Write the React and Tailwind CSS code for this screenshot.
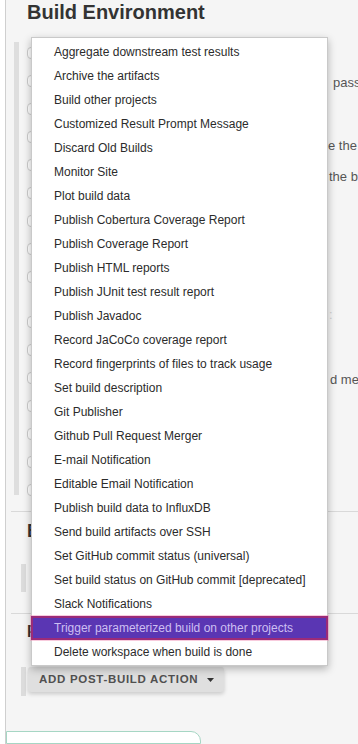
import React from "react";

const items = [
  "Aggregate downstream test results",
  "Archive the artifacts",
  "Build other projects",
  "Customized Result Prompt Message",
  "Discard Old Builds",
  "Monitor Site",
  "Plot build data",
  "Publish Cobertura Coverage Report",
  "Publish Coverage Report",
  "Publish HTML reports",
  "Publish JUnit test result report",
  "Publish Javadoc",
  "Record JaCoCo coverage report",
  "Record fingerprints of files to track usage",
  "Set build description",
  "Git Publisher",
  "Github Pull Request Merger",
  "E-mail Notification",
  "Editable Email Notification",
  "Publish build data to InfluxDB",
  "Send build artifacts over SSH",
  "Set GitHub commit status (universal)",
  "Set build status on GitHub commit [deprecated]",
  "Slack Notifications",
  "Trigger parameterized build on other projects",
  "Delete workspace when build is done",
];

const font = { fontFamily: '"Liberation Sans", Arial, Helvetica, sans-serif' };

function Checkbox({ extra }) {
  return (
    <div
      className={`w-[13px] h-[12px] rounded-[4px] border border-[#cdcdcd] bg-white shrink-0 ${extra}`}
    />
  );
}

function PostBuildMenu() {
  return (
    <div className="absolute left-[31px] top-[37px] w-[297px] bg-white border border-[#c9c9c9] pt-[2px] pb-[1px] shadow-[0_3px_8px_rgba(0,0,0,0.28)]">
      {items.map((label, i) =>
        i === 24 ? (
          <div
            key={label}
            className="-mx-[1px] h-[24px] flex items-center pl-[21px] bg-[#5a36b3] border-2 border-[#9b2b78] text-[12px] text-[#cdbff2] shadow-[0_0_0_1px_rgba(240,140,180,0.45)]"
          >
            {label}
          </div>
        ) : (
          <div
            key={label}
            className="h-[24px] flex items-center pl-[22px] text-[12px] text-[#2b2b2b]"
          >
            {label}
          </div>
        )
      )}
    </div>
  );
}

export default function App() {
  return (
    <div
      className="relative w-[358px] h-[744px] overflow-hidden flex bg-white"
      style={font}
    >
      {/* page gutter */}
      <div className="w-[6px] shrink-0 bg-white border-r border-[#cfcfcf]" />

      <div className="flex-1 bg-[#f5f5f5] flex flex-col">
        <h2 className="pl-[21px] text-[20px] leading-[24px] font-bold text-[#333]">
          Build Environment
        </h2>

        {/* build environment options */}
        <div className="mt-[18px] h-[453px] flex pl-[8px]">
          <div className="w-[5px] h-[453px] bg-[#dedede]" />
          <div className="ml-[8px] pt-[5px] flex flex-col gap-[16px]">
            {Array.from({ length: 16 }).map((_, i) => (
              <Checkbox key={i} extra={i === 9 ? "mt-[17px]" : ""} />
            ))}
          </div>
          <div className="flex-1" />
          <div className="w-[30px] flex flex-col text-[13px] leading-[14px] text-[#555] whitespace-nowrap overflow-hidden">
            <span className="mt-[34px] pl-[5px]">pass</span>
            <span className="mt-[49px]">e the</span>
            <span className="mt-[17px] pl-[1px]">the bu</span>
            <span className="mt-[124px] pl-[1px] text-[#d0d0d0]">:</span>
            <span className="mt-[51px] pl-[2px]">d me</span>
          </div>
        </div>

        {/* Build */}
        <div className="mt-[16px] ml-[5px] border-t border-[#d9d9d9]" />
        <h3 className="mt-[10px] pl-[21px] text-[18px] leading-[18px] font-bold text-[#333]">
          Build
        </h3>
        <div className="mt-[24px] pl-[15px] flex">
          <div className="w-[5px] h-[28px] bg-[#dcdcdc]" />
        </div>

        {/* Post-build Actions */}
        <div className="mt-[21px] ml-[5px] border-t border-[#d9d9d9]" />
        <h3 className="mt-[10px] pl-[21px] text-[16px] leading-[16px] font-bold text-[#333] whitespace-nowrap">
          Post-build Actions
        </h3>
        <div className="mt-[27px] pl-[15px] flex items-start">
          <div className="w-[5px] h-[29px] bg-[#dcdcdc]" />
          <button className="ml-[2px] h-[25px] pl-[11px] pr-[10px] flex items-center gap-[9px] rounded-[3px] bg-[#dfdfdf] shadow-[0_2px_4px_rgba(0,0,0,0.18)] text-[11.5px] font-bold tracking-[0.7px] text-[#505050]">
            ADD POST-BUILD ACTION
            <svg width="7" height="4" viewBox="0 0 7 4">
              <path d="M0 0h7L3.5 4z" fill="#333" />
            </svg>
          </button>
        </div>

        <div className="mt-[35px] w-[195px] h-[40px] border border-[#a6d6c4] rounded-tr-[10px] bg-white" />
      </div>

      <PostBuildMenu />
    </div>
  );
}
